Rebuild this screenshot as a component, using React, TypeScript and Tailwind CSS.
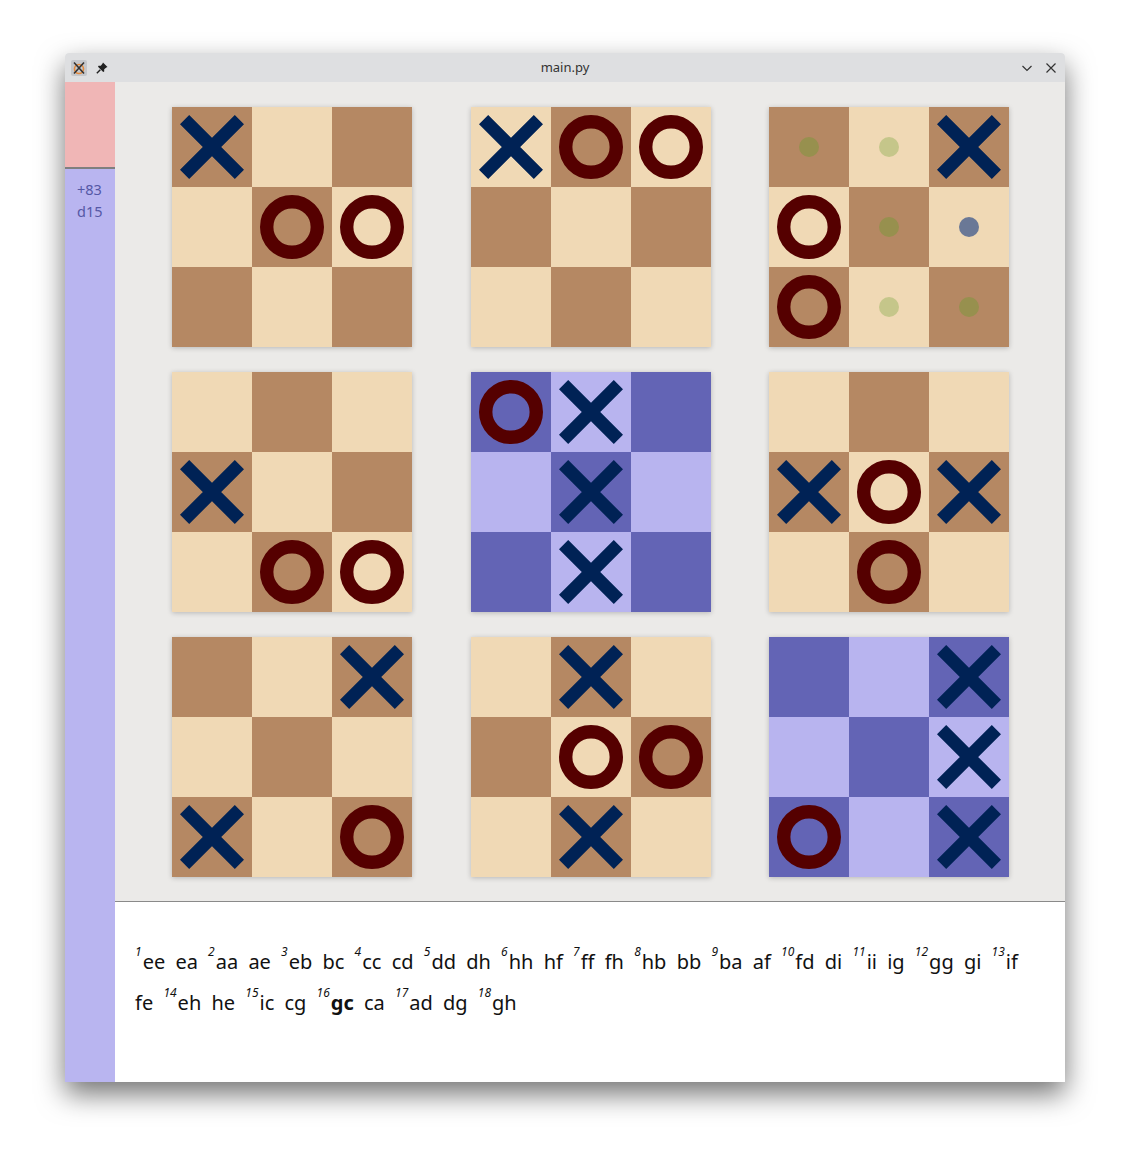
import React from "react";

type Mark = "X" | "O" | "d" | "l" | "b" | null;

const LIGHT = "#f0d9b5";
const DARK = "#b58863";
const BLUE_LIGHT = "#b8b4ef";
const BLUE_DARK = "#6364b5";

const boards: { cells: Mark[]; blue?: boolean }[] = [
  { cells: ["X", null, null, null, "O", "O", null, null, null] },
  { cells: ["X", "O", "O", null, null, null, null, null, null] },
  { cells: ["d", "l", "X", "O", "d", "b", "O", "l", "d"] },
  { cells: [null, null, null, "X", null, null, null, "O", "O"] },
  { cells: ["O", "X", null, null, "X", null, null, "X", null], blue: true },
  { cells: [null, null, null, "X", "O", "X", null, "O", null] },
  { cells: [null, null, "X", null, null, null, "X", null, "O"] },
  { cells: [null, "X", null, null, "O", "O", null, "X", null] },
  { cells: [null, null, "X", null, null, "X", "O", null, "X"], blue: true },
];

const moves: [number, string, string][] = [
  [1, "ee", "ea"],
  [2, "aa", "ae"],
  [3, "eb", "bc"],
  [4, "cc", "cd"],
  [5, "dd", "dh"],
  [6, "hh", "hf"],
  [7, "ff", "fh"],
  [8, "hb", "bb"],
  [9, "ba", "af"],
  [10, "fd", "di"],
  [11, "ii", "ig"],
  [12, "gg", "gi"],
  [13, "if", "fe"],
  [14, "eh", "he"],
  [15, "ic", "cg"],
  [16, "gc", "ca"],
  [17, "ad", "dg"],
  [18, "gh", ""],
];

function Piece({ mark }: { mark: Mark }) {
  if (!mark) return null;
  if (mark === "X") {
    return (
      <svg width="80" height="80" viewBox="0 0 80 80">
        <path d="M12.6 12.6 L67.4 67.4 M67.4 12.6 L12.6 67.4" stroke="#002255" strokeWidth="13" />
      </svg>
    );
  }
  if (mark === "O") {
    return (
      <svg width="80" height="80" viewBox="0 0 80 80">
        <circle cx="40" cy="40" r="25.3" fill="none" stroke="#550000" strokeWidth="13.4" />
      </svg>
    );
  }
  const fill = mark === "d" ? "#97904e" : mark === "l" ? "#c5c68a" : "#6a7896";
  return (
    <svg width="80" height="80" viewBox="0 0 80 80">
      <circle cx="40" cy="40" r="10" fill={fill} />
    </svg>
  );
}

function Board({ cells, blue, parity }: { cells: Mark[]; blue?: boolean; parity: number }) {
  return (
    <div className="grid grid-cols-3 w-[240px] h-[240px] shadow-[0_1px_5px_rgba(0,0,0,0.22)]">
      {cells.map((m, i) => {
        const r = Math.floor(i / 3);
        const c = i % 3;
        const dark = (r + c + parity) % 2 === 0;
        const bg = blue ? (dark ? BLUE_DARK : BLUE_LIGHT) : dark ? DARK : LIGHT;
        return (
          <div key={i} className="w-[80px] h-[80px]" style={{ background: bg }}>
            <Piece mark={m} />
          </div>
        );
      })}
    </div>
  );
}

export default function App() {
  return (
    <div className="w-[1130px] h-[1159px] bg-white pt-[53px] pl-[65px] font-['Noto_Sans',sans-serif]">
      <div className="w-[1000px] h-[1029px] flex flex-col rounded-t-[4px] overflow-hidden shadow-[0_12px_28px_rgba(0,0,0,0.55)]">
        {/* title bar */}
        <div className="h-[29px] bg-[#dedfe1] flex items-center relative shrink-0">
          <div className="ml-[6px] w-[16px] h-[16px] rounded-[2px] bg-[#c5c7cb] flex items-center justify-center">
            <svg width="14" height="14" viewBox="0 0 14 14">
              <circle cx="7" cy="8" r="4.5" fill="none" stroke="#e58a3c" strokeWidth="1.6" />
              <path d="M2 1.5 L12 12.5 M12 1.5 L2 12.5" stroke="#333" strokeWidth="1.6" />
            </svg>
          </div>
          <div className="ml-[9px]">
            <svg width="12" height="12" viewBox="0 0 12 12">
              <path d="M7 0.5 L11.5 5 L10.3 5.6 L8.2 7.2 L8.2 9.5 L7.2 10 L2 4.8 L2.5 3.8 L4.8 3.8 L6.4 1.7 Z" fill="#222" />
              <path d="M4.3 7.7 L0.8 11.2" stroke="#222" strokeWidth="1.4" />
            </svg>
          </div>
          <div className="absolute left-0 right-0 text-center text-[13px] text-[#333] pointer-events-none">main.py</div>
          <div className="ml-auto mr-[8px] flex items-center gap-[12px]">
            <svg width="12" height="12" viewBox="0 0 12 12">
              <path d="M1.5 4 L6 8.5 L10.5 4" fill="none" stroke="#333" strokeWidth="1.2" />
            </svg>
            <svg width="12" height="12" viewBox="0 0 12 12">
              <path d="M1.5 1.5 L10.5 10.5 M10.5 1.5 L1.5 10.5" stroke="#333" strokeWidth="1.2" />
            </svg>
          </div>
        </div>
        <div className="flex flex-1 min-h-0">
          {/* sidebar */}
          <div className="w-[50px] bg-[#b9b5f0] flex flex-col shrink-0">
            <div className="h-[87px] bg-[#f0b6b6] border-b-[2px] border-[#7f7f7f]"></div>
            <div className="pt-[9px] pl-[12px] text-[14.5px] leading-[22px] text-[#5558a6]">
              <div>+83</div>
              <div>d15</div>
            </div>
          </div>
          <div className="flex-1 flex flex-col">
            <div className="h-[820px] bg-[#ebeae8] border-b border-[#8a8a8a] pt-[25px] pl-[57px]">
              <div className="grid grid-cols-[240px_240px_240px] gap-x-[58.5px] gap-y-[25px]">
                {boards.map((b, i) => (
                  <Board key={i} cells={b.cells} blue={b.blue} parity={i % 2} />
                ))}
              </div>
            </div>
            <div className="flex-1 bg-white pt-[39px] pl-[20px] pr-[25px] text-[20px] leading-[41px] text-[#111]">
              {moves.map(([n, a, b]) => (
                <React.Fragment key={n}>
                  <span className="mr-[5px]">
                    <sup className="text-[12px] italic top-[-13px] mr-[1px]">{n}</sup>
                    <span className={n === 16 ? "font-bold" : ""}>{a}</span>
                  </span>{" "}
                  {b && <span className="mr-[5px]">{b}</span>}{" "}
                </React.Fragment>
              ))}
            </div>
          </div>
        </div>
      </div>
    </div>
  );
}
